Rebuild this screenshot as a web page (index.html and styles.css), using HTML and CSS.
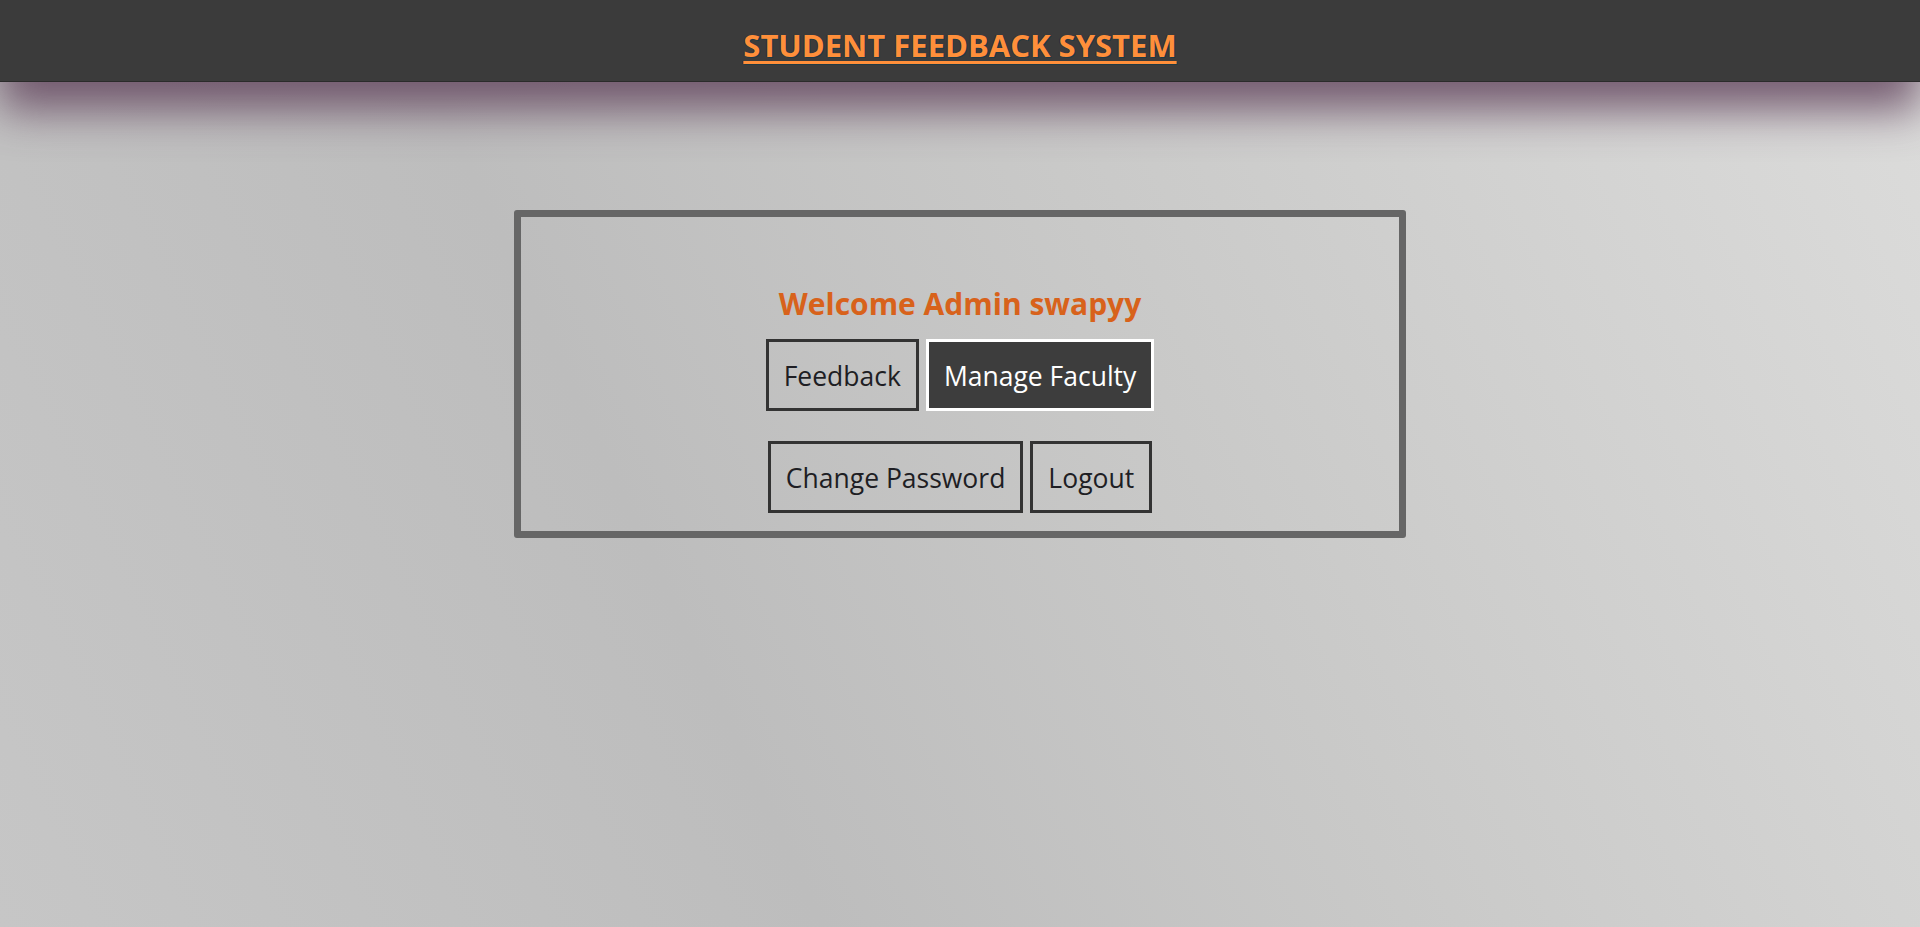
FILE: index.html
```html
<!DOCTYPE html>
<html>
<head>
<meta charset="utf-8">
<link rel="stylesheet" href="styles.css">
</head>
<body>
<header class="topbar">
  <h1 class="title"><a href="#">STUDENT FEEDBACK SYSTEM</a></h1>
</header>
<main class="page">
  <section class="card">
    <h2 class="welcome">Welcome Admin swapyy</h2>
    <div class="row">
      <a class="btn" href="#">Feedback</a>
      <a class="btn btn-dark" href="#">Manage Faculty</a>
    </div>
    <div class="row">
      <a class="btn" href="#">Change Password</a>
      <a class="btn" href="#">Logout</a>
    </div>
  </section>
</main>
</body>
</html>
```

FILE: styles.css
```css
html, body {
  margin: 0;
  padding: 0;
  height: 100%;
}
body {
  font-family: "Open Sans", "Noto Sans", sans-serif;
  background: linear-gradient(65deg, #c6c6c6 0%, #bdbdbd 35%, #c9c9c8 60%, #dcdcdb 100%);
  min-height: 927px;
  overflow: hidden;
}
.topbar {
  position: relative;
  z-index: 1;
  height: 81px;
  background: #3b3b3b;
  border-bottom: 1px solid #2b2b2b;
  box-shadow: 0 28px 44px rgba(100, 70, 95, 0.85);
  display: flex;
  justify-content: center;
}
.title {
  margin: 0;
  padding-top: 25px;
  font-size: 31px;
  font-weight: 700;
  line-height: 40px;
}
.title a {
  color: #ff8f3a;
  text-decoration: underline;
  text-decoration-thickness: 3px;
  text-underline-offset: 4px;
  text-shadow: 1px 1px 0 #1f3a44, -1px 0 0 #2a2a3a;
}
.page {
  display: flex;
  justify-content: center;
  padding-top: 128px;
}
.card {
  width: 878px;
  border: 7px solid #666666;
  border-radius: 3px;
  padding: 67px 0 18px;
  display: flex;
  flex-direction: column;
  align-items: center;
}
.welcome {
  margin: 0 0 15px;
  color: #d8621b;
  font-size: 30px;
  font-weight: 700;
  line-height: 40px;
}
.row {
  display: flex;
  gap: 7px;
  margin-bottom: 30px;
}
.row:last-child {
  margin-bottom: 0;
}
.btn {
  display: block;
  height: 63px;
  line-height: 63px;
  padding: 3px 15px 0;
  border: 3px solid #333333;
  color: #1e1e24;
  font-size: 26.5px;
  text-decoration: none;
}
.btn-dark {
  background: #3d3d3d;
  border-color: #ffffff;
  color: #ffffff;
}
```
